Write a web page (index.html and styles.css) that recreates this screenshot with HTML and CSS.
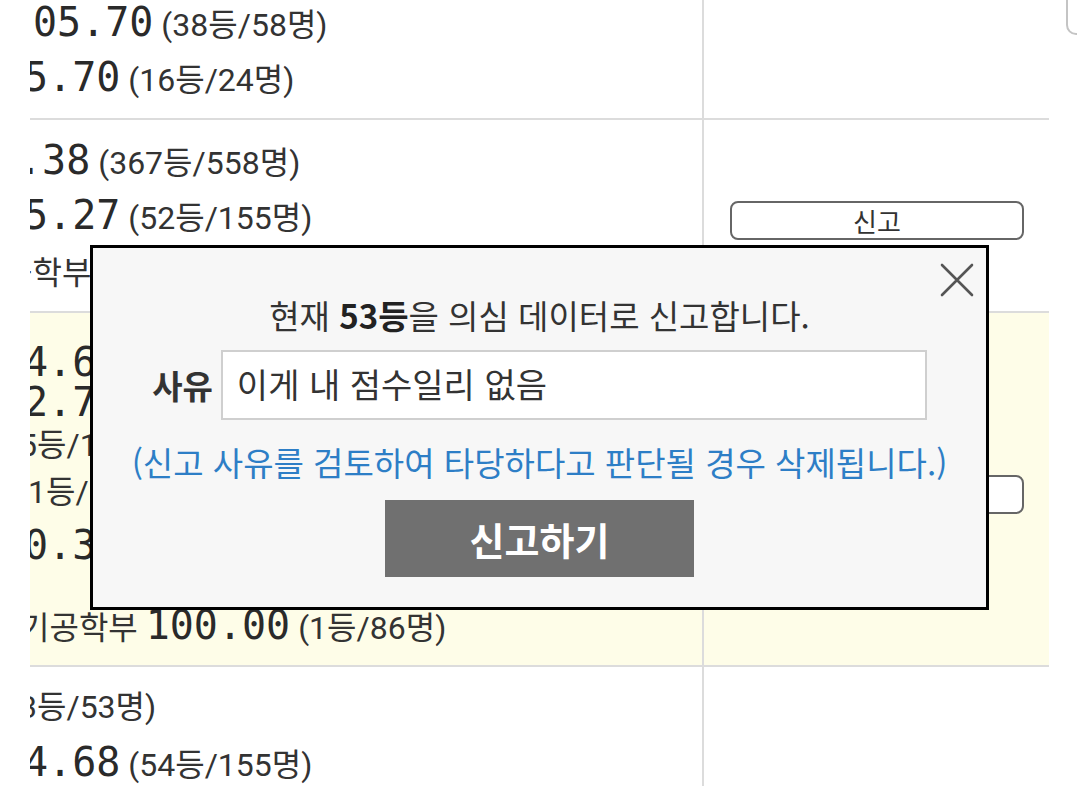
FILE: index.html
```html
<!DOCTYPE html>
<html lang="ko">
<head>
<meta charset="utf-8">
<title>신고</title>
<link rel="stylesheet" href="styles.css">
</head>
<body>
<div class="screen">
  <div class="table">
    <div class="row r-std">
      <div class="cell left">
        <div class="line m0"><span class="seg">12.40</span> <span class="sm">(12등/40명)</span></div>
        <div class="line m3"><span class="seg">05.70</span> <span class="sm">(38등/58명)</span></div>
        <div class="line m-6"><span class="seg">5.70</span> <span class="sm">(16등/24명)</span></div>
      </div>
      <div class="cell right"></div>
    </div>
    <div class="row r-std">
      <div class="cell left">
        <div class="line m-12"><span class="seg">.38</span> <span class="sm">(367등/558명)</span></div>
        <div class="line m-6"><span class="seg">5.27</span> <span class="sm">(52등/155명)</span></div>
        <div class="line m-27"><span class="sm">공학부 <span class="seg">88.12</span> (21등/86명)</span></div>
      </div>
      <div class="cell right"><button class="report">신고</button></div>
    </div>
    <div class="row r-hl">
      <div class="cell left">
        <div class="line h40 m-6"><span class="seg">4.68</span></div>
        <div class="line h40 m-6"><span class="seg">2.75</span></div>
        <div class="line h46 m-11"><span class="sm">5등/155명)</span></div>
        <div class="line h48 m-2"><span class="sm">1등/53명)</span></div>
        <div class="line h58 m-6"><span class="seg">0.38</span></div>
        <div class="line h50 last m-10"><span class="sm">기공학부 <span class="seg">100.00</span> (1등/86명)</span></div>
      </div>
      <div class="cell right"><button class="report">신고</button></div>
    </div>
    <div class="row r-std">
      <div class="cell left">
        <div class="line m-11"><span class="sm">3등/53명)</span></div>
        <div class="line m-6"><span class="seg">4.68</span> <span class="sm">(54등/155명)</span></div>
        <div class="line m0"><span class="seg">90.12</span> <span class="sm">(8등/30명)</span></div>
      </div>
      <div class="cell right"></div>
    </div>
  </div>

  <div class="corner-box"></div>

  <div class="modal">
    <button class="close" aria-label="닫기">
      <svg width="34" height="34" viewBox="0 0 34 34"><path d="M2 2 L32 32 M32 2 L2 32" stroke="#555" stroke-width="2.6" fill="none" stroke-linecap="round"/></svg>
    </button>
    <p class="title">현재 <b>53등</b>을 의심 데이터로 신고합니다.</p>
    <div class="reason-row">
      <span class="label">사유</span>
      <div class="input">이게 내 점수일리 없음</div>
    </div>
    <p class="note">(신고 사유를 검토하여 타당하다고 판단될 경우 삭제됩니다.)</p>
    <button class="submit">신고하기</button>
  </div>
</div>
</body>
</html>
```
FILE: styles.css
```css
html, body {
  margin: 0;
  padding: 0;
  background: #fff;
}
body {
  width: 1077px;
  height: 786px;
  overflow: hidden;
  font-family: "Roboto", "Noto Sans CJK KR", sans-serif;
  color: #333;
}
.screen {
  position: relative;
  width: 1077px;
  height: 786px;
  overflow: hidden;
}
.table {
  margin-top: -73px;
  margin-left: 30px;
  width: 1019px;
  display: flex;
  flex-direction: column;
}
.row {
  display: flex;
  border-bottom: 2px solid #dcdcdc;
}
.r-hl {
  background: #fefde8;
}
.cell.left {
  width: 674px;
  border-right: 2px solid #dcdcdc;
  overflow: hidden;
  box-sizing: border-box;
}
.r-std .cell.left {
  padding: 13px 0;
}
.r-hl .cell.left {
  padding: 29px 0 15px;
}
.cell.right {
  flex: 1;
  display: flex;
  align-items: center;
  justify-content: center;
  padding-top: 10px;
}
.line {
  height: 55px;
  line-height: 55px;
  white-space: nowrap;
  font-size: 32px;
}
.h40 { height: 40px; line-height: 40px; }
.h46 { height: 46px; line-height: 46px; }
.h48 { height: 48px; line-height: 48px; }
.h50 { height: 50px; line-height: 50px; }
.h58 { height: 58px; line-height: 58px; }
.last { margin-top: 26px; }
.m0 { margin-left: 0; }
.m3 { margin-left: 3px; }
.m-2 { margin-left: -2px; }
.m-6 { margin-left: -6px; }
.m-10 { margin-left: -10px; }
.m-11 { margin-left: -11px; }
.m-12 { margin-left: -12px; }
.m-27 { margin-left: -27px; }
.seg {
  font-family: "DejaVu Sans Mono", monospace;
  font-size: 40px;
  color: #2a2a2a;
}
.sm {
  font-size: 32px;
  color: #333;
}
.report {
  width: 294px;
  height: 39px;
  margin-left: 1px;
  border: 2px solid #666;
  border-radius: 8px;
  background: #fff;
  font-family: "Noto Sans CJK KR", sans-serif;
  font-size: 26px;
  line-height: 33px;
  color: #333;
  padding: 0;
}
.corner-box {
  position: absolute;
  left: 1066px;
  top: -40px;
  width: 40px;
  height: 71px;
  border: 2px solid #c4c4c4;
  border-radius: 10px;
  background: #fff;
}
.modal {
  position: absolute;
  left: 90px;
  top: 245px;
  width: 893px;
  height: 314px;
  border: 3px solid #000;
  background: #f7f7f7;
  display: flex;
  flex-direction: column;
  align-items: center;
  padding-top: 45px;
  font-family: "Noto Sans CJK KR", sans-serif;
}
.close {
  position: absolute;
  right: 12px;
  top: 15px;
  width: 34px;
  height: 34px;
  padding: 0;
  border: 0;
  background: transparent;
}
.close svg { display: block; }
.title {
  margin: 0;
  height: 44px;
  line-height: 44px;
  font-size: 33px;
  color: #333;
}
.title b {
  font-weight: 700;
  color: #222;
}
.reason-row {
  margin-top: 13px;
  display: flex;
  align-items: center;
  gap: 8px;
}
.label {
  font-size: 33px;
  font-weight: 700;
  color: #333;
}
.input {
  width: 706px;
  height: 70px;
  box-sizing: border-box;
  border: 2px solid #cfcfcf;
  background: #fff;
  padding-left: 14px;
  font-size: 34px;
  line-height: 64px;
  color: #333;
}
.note {
  margin: 20px 0 0;
  height: 44px;
  line-height: 44px;
  font-size: 33px;
  color: #2d7ec6;
}
.submit {
  margin-top: 16px;
  width: 309px;
  height: 77px;
  border: 0;
  background: #707070;
  color: #fff;
  font-family: "Noto Sans CJK KR", sans-serif;
  font-size: 38px;
  font-weight: 700;
  padding: 0;
}
```
